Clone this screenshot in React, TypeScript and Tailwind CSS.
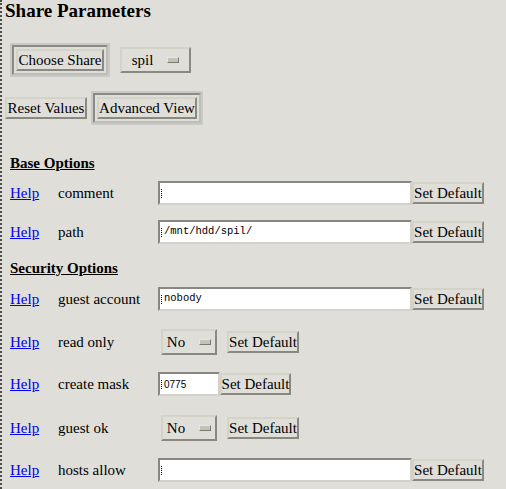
const serif = "font-['Liberation_Serif','Times_New_Roman',serif]";

const raised =
  "border-2 border-t-[#d4d3c8] border-l-[#d4d3c8] border-b-[#8a8980] border-r-[#8a8980] bg-[#dfded8]";

const Btn = ({ label, w }: { label: string; w: string }) => (
  <div className={`${raised} ${w} h-[22px] flex items-center justify-center text-[15px] leading-none text-black whitespace-nowrap`}>
    {label}
  </div>
);

// the highlighted "default" button look
const FramedBtn = ({ label, w }: { label: string; w: string }) => (
  <div className="border-2 border-[#c9c9c6] bg-[#dfded8]">
    <div className="border-2 border-t-[#8a8a88] border-l-[#8a8a88] border-b-[#bdbdba] border-r-[#bdbdba] p-[2px]">
      <Btn label={label} w={w} />
    </div>
  </div>
);

const Select = ({ value, w }: { value: string; w: string }) => (
  <div className={`${raised} ${w} h-[26px] flex items-center justify-center gap-[14px] text-[15px]`}>
    <span>{value}</span>
    <span className="w-[12px] h-[6px] border border-t-[#e8e8e0] border-l-[#e8e8e0] border-b-[#7a7a70] border-r-[#7a7a70] bg-[#c4c3b8]" />
  </div>
);

const Field = ({ value, w, mono = true }: { value: string; w: string; mono?: boolean }) => (
  <div className={`${w} h-[24px] bg-white border-2 border-t-[#868684] border-l-[#868684] border-b-[#d2d1cc] border-r-[#d2d1cc] flex items-center pl-[1px]`}>
    <span className="w-[2px] h-[9px] border-l border-dotted border-black mr-[1px]" />
    <span
      className={
        mono
          ? "font-['Liberation_Mono',monospace] text-[10.5px] text-black"
          : "font-['Liberation_Sans',sans-serif] text-[10px] text-black"
      }
    >
      {value}
    </span>
  </div>
);

const Row = ({ label, mt, children }: { label: string; mt: string; children: React.ReactNode }) => (
  <div className={`flex items-center ${mt}`}>
    <a className="w-[48px] text-[#0000ee] underline text-[15px]">Help</a>
    <span className="w-[100px] text-[15px]">{label}</span>
    {children}
  </div>
);

const Header = ({ text, mt }: { text: string; mt: string }) => (
  <div className={`h-[16px] flex items-center ${mt}`}>
    <span className="font-bold underline text-[15px]">{text}</span>
  </div>
);

export default function App() {
  return (
    <div
      className={`${serif} w-[506px] h-[489px] overflow-hidden bg-[#dfded8] border-l-2 border-dotted border-[#4a4a4a] text-black`}
    >
      <div className="pl-[3px]">
        <h1 className="text-[19px] font-bold leading-[22px]">Share Parameters</h1>

        <div className="flex items-center gap-[10px] ml-[5px] mt-[21px]">
          <FramedBtn label="Choose Share" w="w-[88px]" />
          <Select value="spil" w="w-[71px]" />
        </div>

        <div className="flex items-center gap-[4px] mt-[14px]">
          <Btn label="Reset Values" w="w-[82px]" />
          <FramedBtn label="Advanced View" w="w-[100px]" />
        </div>

        <div className="ml-[5px]">
          <Header text="Base Options" mt="mt-[30px]" />
          <Row label="comment" mt="mt-[10px]">
            <Field value="" w="w-[254px]" />
            <Btn label="Set Default" w="w-[72px]" />
          </Row>
          <Row label="path" mt="mt-[15px]">
            <Field value="/mnt/hdd/spil/" w="w-[254px]" />
            <Btn label="Set Default" w="w-[72px]" />
          </Row>

          <Header text="Security Options" mt="mt-[16px]" />
          <Row label="guest account" mt="mt-[11px]">
            <Field value="nobody" w="w-[254px]" />
            <Btn label="Set Default" w="w-[72px]" />
          </Row>
          <Row label="read only" mt="mt-[18px]">
            <div className="ml-[3px] mr-[10px]">
              <Select value="No" w="w-[56px]" />
            </div>
            <Btn label="Set Default" w="w-[72px]" />
          </Row>
          <Row label="create mask" mt="mt-[17px]">
            <Field value="0775" w="w-[62px]" mono={false} />
            <Btn label="Set Default" w="w-[71px]" />
          </Row>
          <Row label="guest ok" mt="mt-[19px]">
            <div className="ml-[3px] mr-[10px]">
              <Select value="No" w="w-[56px]" />
            </div>
            <Btn label="Set Default" w="w-[72px]" />
          </Row>
          <Row label="hosts allow" mt="mt-[17px]">
            <Field value="" w="w-[254px]" />
            <Btn label="Set Default" w="w-[72px]" />
          </Row>
        </div>
      </div>
    </div>
  );
}
